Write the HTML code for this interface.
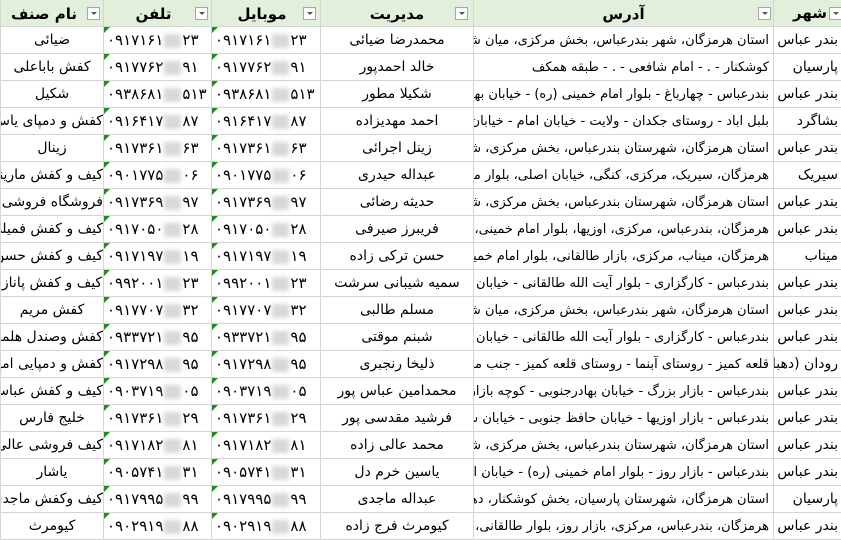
<!DOCTYPE html>
<html><head><meta charset="utf-8">
<style>
html,body{margin:0;padding:0;background:#fff;}
body{width:841px;height:539px;overflow:hidden;font-family:"DejaVu Sans","Liberation Sans",sans-serif;}
table{border-collapse:collapse;table-layout:fixed;width:841px;position:absolute;left:0;top:0;}
td{border:1px solid #d4d4d4;height:26px;padding:0;font-size:14px;color:#000;white-space:nowrap;overflow:hidden;position:relative;}
tr.h td{height:25px;background:#e2efda;font-weight:bold;font-size:15px;text-align:center;border-color:#e2efda #cfd9c8;}
.c{text-align:center;direction:rtl;}
.a{text-align:right;direction:rtl;padding-right:4px;font-size:13px;}
.p{direction:ltr;text-align:left;padding-left:3px;font-size:15px;letter-spacing:1.1px;}
.p:before{content:"";position:absolute;left:0;top:0;border-top:6px solid #1e8e1e;border-right:6px solid transparent;}
.b{display:inline-block;width:17px;height:14px;background:#d8d8d8;filter:blur(2px);vertical-align:middle;margin:0 1px;}
.dd{position:absolute;top:6px;width:13px;height:13px;border:1px solid #a6a6a6;background:#fff;box-sizing:border-box;}
.dd:after{content:"";position:absolute;left:3px;top:4px;border-left:3px solid transparent;border-right:3px solid transparent;border-top:3px solid #555;}
</style></head><body>
<table>
<colgroup><col style="width:103px"><col style="width:108px"><col style="width:109px"><col style="width:153px"><col style="width:300px"><col style="width:68px"></colgroup>
<tr class="h">
<td><span class="dd" style="left:86px"></span><span style="position:relative;left:-8px">نام صنف</span></td>
<td><span class="dd" style="left:91px"></span><span style="position:relative;left:-4px">تلفن</span></td>
<td><span class="dd" style="left:91px"></span><span style="position:relative;left:-4px">موبایل</span></td>
<td><span class="dd" style="left:134px"></span><span style="position:relative;left:0px">مدیریت</span></td>
<td><span class="dd" style="left:284px"></span>آدرس</td>
<td><span class="dd" style="left:55px"></span><span style="position:absolute;right:14px;top:3px">شهر</span></td>
</tr>
</table>
<div id="r"></div>
<script>
var d=[
["بندر عباس","استان هرمزگان،  شهر بندرعباس،  بخش مرکزی، میان شهر","محمدرضا ضیائی","۰۹۱۷۱۶۱","۲۳","ضیائی"],
["پارسیان","کوشکنار - . - امام شافعی - . - طبقه همکف","خالد احمدپور","۰۹۱۷۷۶۲","۹۱","کفش باباعلی"],
["بندر عباس","بندرعباس - چهارباغ - بلوار امام خمینی (ره) - خیابان بهادر","شکیلا مطور","۰۹۳۸۶۸۱","۵۱۳","شکیل"],
["بشاگرد","بلبل اباد - روستای جکدان - ولایت - خیابان امام - خیابان امام","احمد مهدیزاده","۰۹۱۶۴۱۷","۸۷","کفش و دمپای یاس"],
["بندر عباس","استان هرمزگان، شهرستان بندرعباس، بخش مرکزی، شهر بندرعباس","زینل اجرائی","۰۹۱۷۳۶۱","۶۳","زینال"],
["سیریک","هرمزگان، سیریک، مرکزی، کنگی، خیابان اصلی، بلوار معلم","عبداله حیدری","۰۹۰۱۷۷۵","۰۶","کیف و کفش مارینانا"],
["بندر عباس","استان هرمزگان، شهرستان بندرعباس، بخش مرکزی، شهر بندرعباس","حدیثه رضائی","۰۹۱۷۳۶۹","۹۷","فروشگاه فروشی کیف و کفش"],
["بندر عباس","هرمزگان، بندرعباس، مرکزی، اوزیها، بلوار امام خمینی، خیابان","فریبرز صیرفی","۰۹۱۷۰۵۰","۲۸","کیف و کفش فمیلی"],
["میناب","هرمزگان، میناب، مرکزی، بازار طالقانی، بلوار امام خمینی، کوچه","حسن ترکی زاده","۰۹۱۷۱۹۷","۱۹","کیف و کفش حسن ترکی"],
["بندر عباس","بندرعباس - کارگزاری - بلوار آیت الله طالقانی - خیابان اصلی","سمیه شیبانی سرشت","۰۹۹۲۰۰۱","۲۳","کیف و کفش پاناز"],
["بندر عباس","استان هرمزگان،  شهر بندرعباس،  بخش مرکزی، میان شهر","مسلم طالبی","۰۹۱۷۷۰۷","۳۲","کفش مریم"],
["بندر عباس","بندرعباس - کارگزاری - بلوار آیت الله طالقانی - خیابان اصلی","شبنم موقتی","۰۹۳۳۷۲۱","۹۵","کفش وصندل هلما"],
["رودان (دهبار","قلعه کمیز - روستای آبنما - روستای قلعه کمیز - جنب مسجد","ذلیخا رنجبری","۰۹۱۷۲۹۸","۹۵","کفش و دمپایی امیر حسین"],
["بندر عباس","بندرعباس - بازار بزرگ - خیابان بهادرجنوبی - کوچه بازار بزرگ","محمدامین عباس پور","۰۹۰۳۷۱۹","۰۵","کیف و کفش عباس پور"],
["بندر عباس","بندرعباس - بازار اوزیها - خیابان حافظ جنوبی - خیابان شهید","فرشید مقدسی پور","۰۹۱۷۳۶۱","۲۹","خلیج فارس"],
["بندر عباس","استان هرمزگان، شهرستان بندرعباس، بخش مرکزی، شهر بندرعباس","محمد عالی زاده","۰۹۱۷۱۸۲","۸۱","کیف فروشی عالی"],
["بندر عباس","بندرعباس - بازار روز - بلوار امام خمینی (ره) - خیابان اصلی","یاسین خرم دل","۰۹۰۵۷۴۱","۳۱","یاشار"],
["پارسیان","استان هرمزگان، شهرستان پارسیان، بخش کوشکنار، دهستان","عبداله ماجدی","۰۹۱۷۹۹۵","۹۹","کیف وکفش ماجدی"],
["بندر عباس","هرمزگان، بندرعباس، مرکزی، بازار روز، بلوار طالقانی، کوچه","کیومرث فرج زاده","۰۹۰۲۹۱۹","۸۸","کیومرث"]];
var h='<table style="top:26px"><colgroup><col style="width:103px"><col style="width:108px"><col style="width:109px"><col style="width:153px"><col style="width:300px"><col style="width:68px"></colgroup>';
d.forEach(function(r){
var ph='<td class="p">'+r[3]+'<span class="b"></span>'+r[4]+'</td>';
h+='<tr><td class="c">'+r[5]+'</td>'+ph+ph+'<td class="c">'+r[2]+'</td><td class="a">'+r[1]+'</td><td class="c" style="text-align:right;padding-right:3px">'+r[0]+'</td></tr>';
});
h+='</table>';
document.getElementById('r').innerHTML=h;
</script>
</body></html>
